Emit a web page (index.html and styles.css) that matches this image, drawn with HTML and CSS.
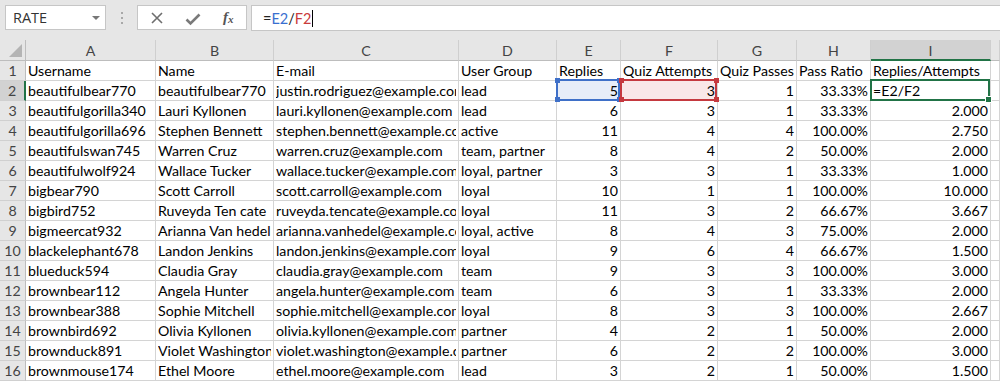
FILE: index.html
```html
<!DOCTYPE html>
<html lang="en">
<head>
  <meta charset="UTF-8" />
  <title>Quiz stats - Excel</title>
  <link rel="stylesheet" href="styles.css">
</head>
<body>

  <!-- Formula bar -->
  <div class="formula-bar">
    <div class="name-box">
      <span>RATE</span>
      <span class="drop"></span>
    </div>
    <div class="grip"><i></i><i></i><i></i></div>
    <div class="fx-buttons">
      <svg width="14" height="14" viewBox="0 0 14 14" class="btn-cancel">
        <path d="M2 2 L12 12 M12 2 L2 12" stroke="#6e6e6e" stroke-width="1.6" fill="none" />
      </svg>
      <svg width="16" height="14" viewBox="0 0 16 14" class="btn-enter">
        <path d="M1.5 7.5 L5.5 11.5 L14.5 2.5" stroke="#7a7a7a" stroke-width="2.6" fill="none" />
      </svg>
      <span class="fx">f<sub>x</sub></span>
    </div>
    <div class="formula-input">
      =<span class="ref-blue">E2</span>/<span class="ref-red">F2</span><span class="caret"></span>
    </div>
  </div>

  <!-- Sheet -->
  <div class="sheet" id="sheet"></div>

  <script>
    const columns = ["A", "B", "C", "D", "E", "F", "G", "H", "I", ""];

    const rows = [
      ["Username", "Name", "E-mail", "User Group", "Replies", "Quiz Attempts", "Quiz Passes", "Pass Ratio", "Replies/Attempts"],
      ["beautifulbear770", "beautifulbear770", "justin.rodriguez@example.com", "lead", 5, 3, 1, "33.33%", "=E2/F2"],
      ["beautifulgorilla340", "Lauri Kyllonen", "lauri.kyllonen@example.com", "lead", 6, 3, 1, "33.33%", "2.000"],
      ["beautifulgorilla696", "Stephen Bennett", "stephen.bennett@example.com", "active", 11, 4, 4, "100.00%", "2.750"],
      ["beautifulswan745", "Warren Cruz", "warren.cruz@example.com", "team, partner", 8, 4, 2, "50.00%", "2.000"],
      ["beautifulwolf924", "Wallace Tucker", "wallace.tucker@example.com", "loyal, partner", 3, 3, 1, "33.33%", "1.000"],
      ["bigbear790", "Scott Carroll", "scott.carroll@example.com", "loyal", 10, 1, 1, "100.00%", "10.000"],
      ["bigbird752", "Ruveyda Ten cate", "ruveyda.tencate@example.com", "loyal", 11, 3, 2, "66.67%", "3.667"],
      ["bigmeercat932", "Arianna Van hedel", "arianna.vanhedel@example.com", "loyal, active", 8, 4, 3, "75.00%", "2.000"],
      ["blackelephant678", "Landon Jenkins", "landon.jenkins@example.com", "loyal", 9, 6, 4, "66.67%", "1.500"],
      ["blueduck594", "Claudia Gray", "claudia.gray@example.com", "team", 9, 3, 3, "100.00%", "3.000"],
      ["brownbear112", "Angela Hunter", "angela.hunter@example.com", "team", 6, 3, 1, "33.33%", "2.000"],
      ["brownbear388", "Sophie Mitchell", "sophie.mitchell@example.com", "loyal", 8, 3, 3, "100.00%", "2.667"],
      ["brownbird692", "Olivia Kyllonen", "olivia.kyllonen@example.com", "partner", 4, 2, 1, "50.00%", "2.000"],
      ["brownduck891", "Violet Washington", "violet.washington@example.com", "partner", 6, 2, 2, "100.00%", "3.000"],
      ["brownmouse174", "Ethel Moore", "ethel.moore@example.com", "lead", 3, 2, 1, "50.00%", "1.500"]
    ];

    function buildSheet() {
      let html = '<div class="corner"><span class="select-all"></span></div>';

      columns.forEach((c, i) => {
        const active = c === "I" ? " active-col" : "";
        html += `<div class="col-head${active}">${c}</div>`;
      });

      rows.forEach((row, r) => {
        const num = r + 1;
        const activeRow = num === 2 ? " active-row" : "";
        html += `<div class="row-head${activeRow}">${num}</div>`;

        row.forEach((val, c) => {
          let cls = "cell";
          if (r > 0 && c >= 4 && c !== 8) cls += " num";
          if (r > 0 && c === 8 && num !== 2) cls += " num";
          if (num === 2 && c === 4) cls += " ref ref-e";
          if (num === 2 && c === 5) cls += " ref ref-f";
          if (num === 2 && c === 8) cls += " current";

          let extra = "";
          if (cls.includes("ref")) {
            extra = '<i class="h tl"></i><i class="h tr"></i><i class="h bl"></i><i class="h br"></i>';
          }
          if (cls.includes("current")) {
            extra = '<i class="fill-handle"></i>';
          }
          html += `<div class="${cls}"><span class="val">${val}</span>${extra}</div>`;
        });
        html += '<div class="cell"></div>';
      });

      document.getElementById("sheet").innerHTML = html;
    }

    buildSheet();
  </script>

</body>
</html>
```

FILE: styles.css
```css
body {
  margin: 0;
  background: #e6e6e6;
  font-family: Lato, 'Liberation Sans', sans-serif;
  overflow: hidden;
}

/* ---- formula bar ---- */
.formula-bar {
  height: 40px;
  display: flex;
  align-items: flex-start;
  padding-top: 5px;
  box-sizing: border-box;
}

.name-box {
  margin-left: 5px;
  width: 101px;
  height: 25px;
  box-sizing: border-box;
  background: #fff;
  border: 1px solid #c6c6c6;
  display: flex;
  align-items: center;
  justify-content: space-between;
  padding: 0 5px 0 7px;
  font-family: 'Open Sans', 'Liberation Sans', sans-serif;
  font-size: 14.5px;
  color: #333;
}

.drop {
  width: 0;
  height: 0;
  border-left: 4px solid transparent;
  border-right: 4px solid transparent;
  border-top: 4px solid #777;
}

.grip {
  width: 31px;
  height: 25px;
  display: flex;
  flex-direction: column;
  align-items: center;
  justify-content: center;
  gap: 3px;
}

.grip i {
  width: 2px;
  height: 2px;
  background: #a8a8a8;
}

.fx-buttons {
  width: 110px;
  height: 25px;
  box-sizing: border-box;
  background: #fff;
  border: 1px solid #c6c6c6;
  display: flex;
  align-items: center;
  padding-left: 12px;
}

.btn-cancel {
  margin-top: 1px;
}

.btn-enter {
  margin-left: 21px;
  margin-top: 2px;
}

.fx {
  margin-left: 22px;
  font-family: 'Liberation Serif', serif;
  font-style: italic;
  font-size: 15px;
  color: #555;
  font-weight: bold;
}

.fx sub {
  font-size: 11px;
  vertical-align: -1px;
}

.formula-input {
  margin-left: 4px;
  flex: 1;
  height: 26px;
  box-sizing: border-box;
  background: #fff;
  border: 1px solid #c6c6c6;
  border-right: none;
  display: flex;
  align-items: center;
  padding-left: 11px;
  font-size: 14.5px;
  color: #222;
}

.ref-blue {
  color: #3a6fd0;
}

.ref-red {
  color: #c93b3b;
}

.caret {
  width: 1px;
  height: 17px;
  background: #000;
  margin-left: 1px;
}

/* ---- sheet grid ---- */
.sheet {
  display: grid;
  grid-template-columns: 26px 130px 118px 185px 98px 64px 97px 79px 74px 120px 1fr;
  grid-template-rows: 21px;
  grid-auto-rows: 20px;
  background: #fff;
  font-size: 14.2px;
  color: #000;
}

.corner,
.col-head,
.row-head {
  background: #e6e6e6;
  color: #444;
  box-sizing: border-box;
  text-align: center;
}

.corner {
  border-right: 1px solid #bdbdbd;
  border-bottom: 1px solid #bdbdbd;
  position: relative;
}

.select-all {
  position: absolute;
  right: 3px;
  bottom: 3px;
  width: 0;
  height: 0;
  border-left: 13px solid transparent;
  border-bottom: 13px solid #b4b4b4;
}

.col-head {
  border-right: 1px solid #cfcfcf;
  border-bottom: 1px solid #bdbdbd;
  line-height: 21px;
}

.col-head.active-col {
  background: #d2d2d2;
  border-bottom: 2px solid #217346;
}

.row-head {
  border-right: 1px solid #bdbdbd;
  border-bottom: 1px solid #d0d0d0;
  line-height: 19px;
}

.row-head.active-row {
  background: #d2d2d2;
  border-right: 2px solid #217346;
}

.cell {
  box-sizing: border-box;
  border-right: 1px solid #d4d4d4;
  border-bottom: 1px solid #d4d4d4;
  line-height: 20px;
  padding: 0 2px;
  white-space: nowrap;
  overflow: hidden;
  position: relative;
}

.cell .val {
  display: block;
  overflow: hidden;
}

.cell.num {
  text-align: right;
}

/* formula references */
.cell.ref,
.cell.current {
  overflow: visible;
  z-index: 2;
}

.cell.ref-e {
  background: #e7edf8;
}

.cell.ref-f {
  background: #f9e7e8;
}

.cell.ref::after,
.cell.current::after {
  content: "";
  position: absolute;
  top: -2px;
  left: -1px;
  right: 0;
  bottom: -1px;
  border: 2px solid #3f70c8;
  pointer-events: none;
}

.cell.ref-f::after {
  border-color: #c5393f;
}

.cell.current::after {
  border-color: #217346;
}

.cell .h {
  position: absolute;
  width: 5px;
  height: 5px;
  background: #3f70c8;
  z-index: 3;
}

.cell.ref-f .h {
  background: #c5393f;
}

.h.tl { top: -3px; left: -2px; }
.h.tr { top: -3px; right: -2px; }
.h.bl { bottom: -2px; left: -2px; }
.h.br { bottom: -2px; right: -2px; }

.fill-handle {
  position: absolute;
  right: -2px;
  bottom: -3px;
  width: 5px;
  height: 5px;
  background: #217346;
  border: 1px solid #fff;
  z-index: 3;
}
```
